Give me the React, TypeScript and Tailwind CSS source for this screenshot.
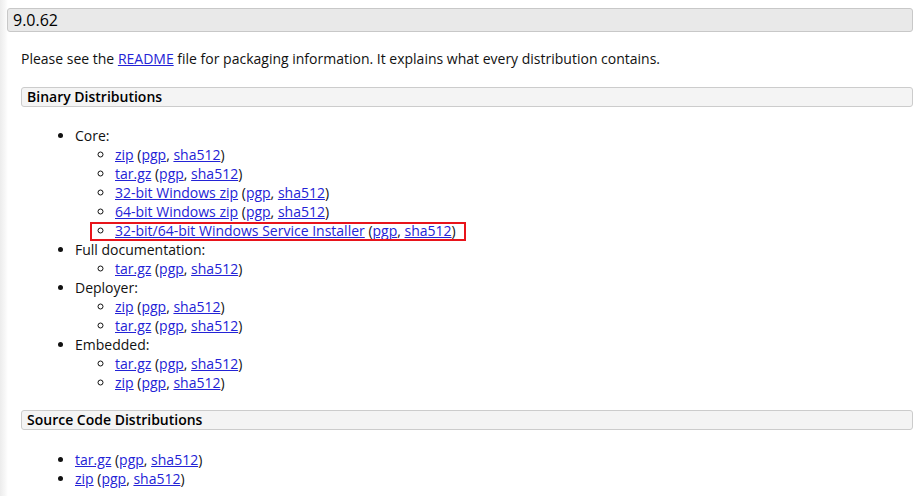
import React from "react";

const L = ({ children }: { children: React.ReactNode }) => (
  <a href="#" className="text-[#2323d6] underline">
    {children}
  </a>
);

const Item = ({ name }: { name: string }) => (
  <>
    <L>{name}</L> (<L>pgp</L>, <L>sha512</L>)
  </>
);

export default function App() {
  return (
    <div
      className="w-[920px] h-[496px] overflow-hidden bg-[linear-gradient(to_right,#ececec,#f7f7f7_5px,#ffffff_8px)] text-[#111] text-[14px] leading-[19px]"
      style={{ fontFamily: '"Open Sans", "Liberation Sans", sans-serif' }}
    >
      <div className="ml-[7px] mr-[7px] pt-[8px]">
        <div className="h-[24px] border border-[#c8c8c8] rounded-[3px] bg-[#e9e9e9] pl-[5px] text-[16px] leading-[22px] text-black">
          9.0.62
        </div>
      </div>
      <div className="ml-[21px] mr-[7px]">
        <p className="mt-[17px]">
          Please see the <L>README</L> file for packaging information. It explains what every distribution contains.
        </p>
        <div className="mt-[19px] h-[20px] border border-[#cccccc] rounded-[3px] bg-[#f4f4f4] pl-[5px] font-semibold text-[14px] leading-[18px] text-black">
          Binary Distributions
        </div>
        <ul className="mt-[19px] pl-[54px] list-disc">
          <li>
            Core:
            <ul className="pl-[40px] list-[circle]">
              <li><Item name="zip" /></li>
              <li><Item name="tar.gz" /></li>
              <li><Item name="32-bit Windows zip" /></li>
              <li><Item name="64-bit Windows zip" /></li>
              <li>
                <span className="relative inline-block">
                  <Item name="32-bit/64-bit Windows Service Installer" />
                  <span className="absolute -left-[25px] -right-[10px] top-[1px] bottom-[-1px] border-2 border-[#e8141b] pointer-events-none" />
                </span>
              </li>
            </ul>
          </li>
          <li>
            Full documentation:
            <ul className="pl-[40px] list-[circle]">
              <li><Item name="tar.gz" /></li>
            </ul>
          </li>
          <li>
            Deployer:
            <ul className="pl-[40px] list-[circle]">
              <li><Item name="zip" /></li>
              <li><Item name="tar.gz" /></li>
            </ul>
          </li>
          <li>
            Embedded:
            <ul className="pl-[40px] list-[circle]">
              <li><Item name="tar.gz" /></li>
              <li><Item name="zip" /></li>
            </ul>
          </li>
        </ul>
        <div className="mt-[18px] h-[20px] border border-[#cccccc] rounded-[3px] bg-[#f4f4f4] pl-[5px] font-semibold text-[14px] leading-[18px] text-black">
          Source Code Distributions
        </div>
        <ul className="mt-[20px] pl-[54px] list-disc">
          <li><Item name="tar.gz" /></li>
          <li><Item name="zip" /></li>
        </ul>
      </div>
    </div>
  );
}
